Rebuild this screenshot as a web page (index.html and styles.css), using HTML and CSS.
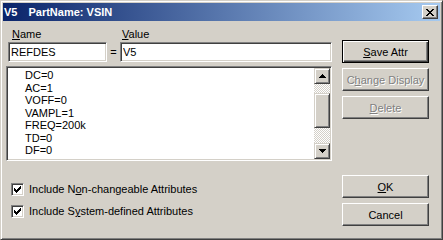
FILE: index.html
```html
<!DOCTYPE html>
<html lang="en">
<head>
    <meta charset="UTF-8">
    <title>V5 PartName: VSIN</title>
    <link rel="stylesheet" href="styles.css">
</head>
<body>

<div class="window">
    <!-- Title bar -->
    <div class="titlebar">
        <span class="title">V5<span class="title-gap">PartName: VSIN</span></span>
        <button class="close-btn" aria-label="Close">
            <svg width="8" height="7" viewBox="0 0 8 7" shape-rendering="crispEdges">
                <path d="M0 0h2v1h-2z M6 0h2v1h-2z M1 1h2v1h-2z M5 1h2v1h-2z M2 2h4v1h-4z M3 3h2v1h-2z M2 4h4v1h-4z M1 5h2v1h-2z M5 5h2v1h-2z M0 6h2v1h-2z M6 6h2v1h-2z" fill="#000"/>
            </svg>
        </button>
    </div>

    <div class="dialog-body">
        <!-- Left side: name/value and attribute list -->
        <div class="left-col">
            <div class="labels">
                <label class="name-label" for="attrName"><u>N</u>ame</label>
                <label for="attrValue"><u>V</u>alue</label>
            </div>
            <div class="fields">
                <input type="text" id="attrName" class="field name-field" value="REFDES">
                <span class="equals">=</span>
                <input type="text" id="attrValue" class="field value-field" value="V5">
            </div>

            <div class="listbox">
                <ul class="attr-list">
                    <li>DC=0</li>
                    <li>AC=1</li>
                    <li>VOFF=0</li>
                    <li>VAMPL=1</li>
                    <li>FREQ=200k</li>
                    <li>TD=0</li>
                    <li>DF=0</li>
                </ul>
                <div class="scrollbar">
                    <div class="sb-btn">
                        <svg width="7" height="4" viewBox="0 0 7 4" shape-rendering="crispEdges">
                            <path d="M3 0h1v1h-1z M2 1h3v1h-3z M1 2h5v1h-5z M0 3h7v1h-7z" fill="#000"/>
                        </svg>
                    </div>
                    <div class="sb-track">
                        <div class="sb-thumb"></div>
                    </div>
                    <div class="sb-btn">
                        <svg width="7" height="4" viewBox="0 0 7 4" shape-rendering="crispEdges">
                            <path d="M0 0h7v1h-7z M1 1h5v1h-5z M2 2h3v1h-3z M3 3h1v1h-1z" fill="#000"/>
                        </svg>
                    </div>
                </div>
            </div>

            <div class="check-row first">
                <span class="checkbox">
                    <svg width="7" height="7" viewBox="0 0 7 7" shape-rendering="crispEdges">
                        <path d="M6 0h1v1h-1z M5 1h2v1h-2z M0 2h1v1h-1z M4 2h3v1h-3z M0 3h2v1h-2z M3 3h3v1h-3z M0 4h5v1h-5z M1 5h3v1h-3z M2 6h1v1h-1z" fill="#000"/>
                    </svg>
                </span>
                <span>Include N<u>o</u>n-changeable Attributes</span>
            </div>
            <div class="check-row">
                <span class="checkbox">
                    <svg width="7" height="7" viewBox="0 0 7 7" shape-rendering="crispEdges">
                        <path d="M6 0h1v1h-1z M5 1h2v1h-2z M0 2h1v1h-1z M4 2h3v1h-3z M0 3h2v1h-2z M3 3h3v1h-3z M0 4h5v1h-5z M1 5h3v1h-3z M2 6h1v1h-1z" fill="#000"/>
                    </svg>
                </span>
                <span>Include S<u>y</u>stem-defined Attributes</span>
            </div>
        </div>

        <!-- Right side: buttons -->
        <div class="right-col">
            <button class="btn default-btn"><u>S</u>ave Attr</button>
            <button class="btn" disabled>C<u>h</u>ange Display</button>
            <button class="btn" disabled><u>D</u>elete</button>
            <button class="btn ok-btn"><u>O</u>K</button>
            <button class="btn">Cancel</button>
        </div>
    </div>
</div>

</body>
</html>
```

FILE: styles.css
```css
body {
    margin: 0;
    font-family: "Liberation Sans", Arial, sans-serif;
    font-size: 11px;
    color: #000;
}

.window {
    box-sizing: border-box;
    width: 443px;
    height: 240px;
    background-color: #d4d0c8;
    border: 1px solid;
    border-color: #d4d0c8 #404040 #404040 #d4d0c8;
    box-shadow: inset 1px 1px #fff, inset -1px -1px #808080;
    padding: 2px;
}

/* Title bar */
.titlebar {
    height: 18px;
    display: flex;
    align-items: center;
    justify-content: space-between;
    padding: 0 2px 0 1px;
    background: linear-gradient(to right, #0a246a, #a6caf0);
    color: #fff;
    font-weight: bold;
}

.title-gap {
    margin-left: 11px;
}

.close-btn {
    box-sizing: border-box;
    width: 16px;
    height: 14px;
    padding: 0;
    display: flex;
    align-items: center;
    justify-content: center;
    background-color: #d4d0c8;
    border: 1px solid;
    border-color: #fff #404040 #404040 #fff;
    box-shadow: inset -1px -1px #808080;
}

/* Body layout */
.dialog-body {
    display: flex;
    align-items: flex-start;
    padding: 6px 0 0 3px;
}

.left-col {
    width: 326px;
}

.labels {
    display: flex;
    height: 14px;
    line-height: 14px;
}

.name-label {
    box-sizing: border-box;
    width: 116px;
    padding-left: 6px;
}

.fields {
    display: flex;
    align-items: center;
    margin-top: 1px;
}

.field {
    box-sizing: border-box;
    height: 20px;
    margin: 0;
    padding: 0 2px;
    font: inherit;
    color: #000;
    background-color: #fff;
    border: 1px solid;
    border-color: #808080 #fff #fff #808080;
    box-shadow: inset 1px 1px #404040, inset -1px -1px #d4d0c8;
    outline: none;
}

.name-field {
    width: 99px;
    margin-left: 2px;
}

.equals {
    width: 13px;
    text-align: center;
}

.value-field {
    width: 212px;
}

/* Attribute list */
.listbox {
    box-sizing: border-box;
    display: flex;
    width: 326px;
    height: 95px;
    margin-top: 4px;
    background-color: #fff;
    border: 1px solid;
    border-color: #808080 #fff #fff #808080;
    box-shadow: inset 1px 1px #404040, inset -1px -1px #d4d0c8;
    padding: 1px;
}

.attr-list {
    flex: 1;
    list-style: none;
    margin: 0;
    padding: 1px 0 0 17px;
    line-height: 12.5px;
    overflow: hidden;
}

.scrollbar {
    width: 16px;
    display: flex;
    flex-direction: column;
}

.sb-btn,
.sb-thumb {
    box-sizing: border-box;
    background-color: #d4d0c8;
    border: 1px solid;
    border-color: #d4d0c8 #404040 #404040 #d4d0c8;
    box-shadow: inset 1px 1px #fff, inset -1px -1px #808080;
}

.sb-btn {
    height: 16px;
    display: flex;
    align-items: center;
    justify-content: center;
}

.sb-track {
    flex: 1;
    background-color: #d4d0c8;
    background-image: conic-gradient(#fff 25%, transparent 0 50%, #fff 0 75%, transparent 0);
    background-size: 2px 2px;
}

.sb-thumb {
    height: 35px;
    margin-top: 9px;
}

/* Checkboxes */
.check-row {
    display: flex;
    align-items: center;
    height: 13px;
    line-height: 13px;
    margin-top: 9px;
    padding-left: 5px;
}

.check-row.first {
    margin-top: 22px;
}

.checkbox {
    box-sizing: border-box;
    width: 13px;
    height: 13px;
    margin-right: 5px;
    display: flex;
    align-items: center;
    justify-content: center;
    background-color: #fff;
    border: 1px solid;
    border-color: #808080 #fff #fff #808080;
    box-shadow: inset 1px 1px #404040, inset -1px -1px #d4d0c8;
}

/* Buttons */
.right-col {
    display: flex;
    flex-direction: column;
    width: 87px;
    margin: 13px 0 0 10px;
}

.btn {
    box-sizing: border-box;
    height: 23px;
    margin: 5px 0 0;
    padding: 0;
    font: inherit;
    color: #000;
    background-color: #d4d0c8;
    border: 1px solid;
    border-color: #fff #404040 #404040 #fff;
    box-shadow: inset -1px -1px #808080;
}

.default-btn {
    margin-top: 0;
    border-color: #000;
    box-shadow: inset 1px 1px #fff, inset -1px -1px #404040, inset -2px -2px #808080;
}

.btn:disabled {
    color: #808080;
    text-shadow: 1px 1px 0 #fff;
}

.ok-btn {
    margin-top: 56px;
}
```
